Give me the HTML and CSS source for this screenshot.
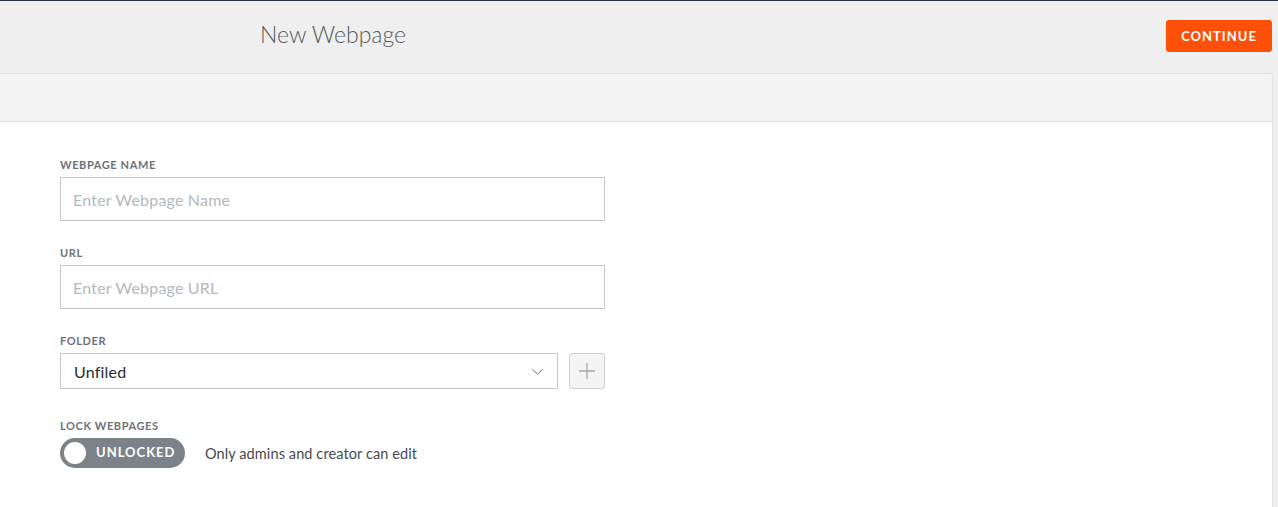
FILE: index.html
```html
<!DOCTYPE html>
<html>
<head>
<meta charset="utf-8">
<link rel="stylesheet" href="styles.css">
</head>
<body>
<header class="topbar">
  <h1 class="title">New Webpage</h1>
  <button class="btn-continue">CONTINUE</button>
</header>
<main class="panel">
  <div class="panel-head"></div>
  <div class="panel-body">
    <div class="field">
      <label class="label">WEBPAGE NAME</label>
      <div class="input placeholder">Enter Webpage Name</div>
    </div>
    <div class="field">
      <label class="label">URL</label>
      <div class="input placeholder">Enter Webpage URL</div>
    </div>
    <div class="field">
      <label class="label">FOLDER</label>
      <div class="folder-row">
        <div class="select">
          <span>Unfiled</span>
          <svg class="chev" width="11" height="6" viewBox="0 0 11 6"><path d="M0.5 0.5 L5.5 5 L10.5 0.5" fill="none" stroke="#666" stroke-width="0.9"/></svg>
        </div>
        <div class="plus-btn">
          <svg width="18" height="18" viewBox="0 0 18 18"><path d="M9 1 V17 M1 9 H17" stroke="#a4a8ac" stroke-width="1.3"/></svg>
        </div>
      </div>
    </div>
    <div class="field field-lock">
      <label class="label">LOCK WEBPAGES</label>
      <div class="lock-row">
        <div class="toggle"><span class="knob"></span><span class="toggle-text">UNLOCKED</span></div>
        <span class="desc">Only admins and creator can edit</span>
      </div>
    </div>
  </div>
</main>
</body>
</html>
```
FILE: styles.css
```css
* { box-sizing: border-box; }
html, body { margin: 0; padding: 0; }
body {
  background: #efefef;
  border-top: 1px solid #2b3440;
  font-family: Lato, "Open Sans", sans-serif;
  height: 507px;
  overflow: hidden;
}
.topbar {
  height: 72px;
  display: flex;
  align-items: center;
  padding-right: 6px;
}
.title {
  margin: 0 0 0 260px;
  font-size: 23px;
  font-weight: 300;
  color: #555a60;
  position: relative;
  top: -3px;
}
.btn-continue {
  margin-left: auto;
  width: 106px;
  height: 32px;
  background: #fe5009;
  color: #fff;
  border: none;
  border-radius: 3px;
  font-family: Lato, sans-serif;
  font-size: 13px;
  font-weight: 700;
  letter-spacing: 1px;
  position: relative;
  top: -1px;
}
.panel {
  margin-right: 5px;
  background: #fff;
  border: 1px solid #e2e2e2;
  border-left: none;
  border-bottom: none;
  border-radius: 0 4px 0 0;
  height: 440px;
}
.panel-head {
  height: 48px;
  background: #f4f4f4;
  border-bottom: 1px solid #d8e2df;
  border-radius: 0 4px 0 0;
}
.panel-body {
  padding: 36px 0 0 60px;
  width: 605px;
  box-sizing: content-box;
}
.field { margin-bottom: 25px; width: 545px; }
.label {
  display: block;
  font-size: 11px;
  font-weight: 700;
  letter-spacing: 0.6px;
  color: #6c7277;
  line-height: 14px;
  margin-bottom: 5px;
}
.field-lock { margin-top: 30px; }
.input {
  height: 44px;
  border: 1px solid #c9c9c9;
  padding: 0 12px;
  display: flex;
  align-items: center;
  font-size: 16px;
  letter-spacing: 0.2px;
}
.placeholder { color: #b3b8bd; }
.folder-row { display: flex; gap: 11px; }
.select {
  flex: 1;
  height: 36px;
  border: 1px solid #c9c9c9;
  display: flex;
  align-items: center;
  justify-content: space-between;
  padding: 0 14px 0 13px;
  font-size: 16px;
  letter-spacing: 0.2px;
  color: #2a2a2a;
}
.chev { margin-top: 1px; }
.plus-btn {
  width: 36px;
  height: 36px;
  border: 1px solid #cfcfcf;
  border-radius: 3px;
  background: #f4f4f4;
  display: flex;
  align-items: center;
  justify-content: center;
}
.lock-row { display: flex; align-items: center; gap: 20px; }
.toggle {
  width: 125px;
  height: 30px;
  border-radius: 15px;
  background: #7b8288;
  display: flex;
  align-items: center;
  padding-left: 4px;
}
.knob {
  width: 22px;
  height: 22px;
  border-radius: 50%;
  background: #fff;
}
.toggle-text {
  margin-left: 10px;
  color: #fff;
  font-size: 13px;
  font-weight: 700;
  letter-spacing: 1px;
  margin-top: -2px;
}
.desc { font-size: 14.5px; color: #444a50; letter-spacing: 0.1px; }
```
